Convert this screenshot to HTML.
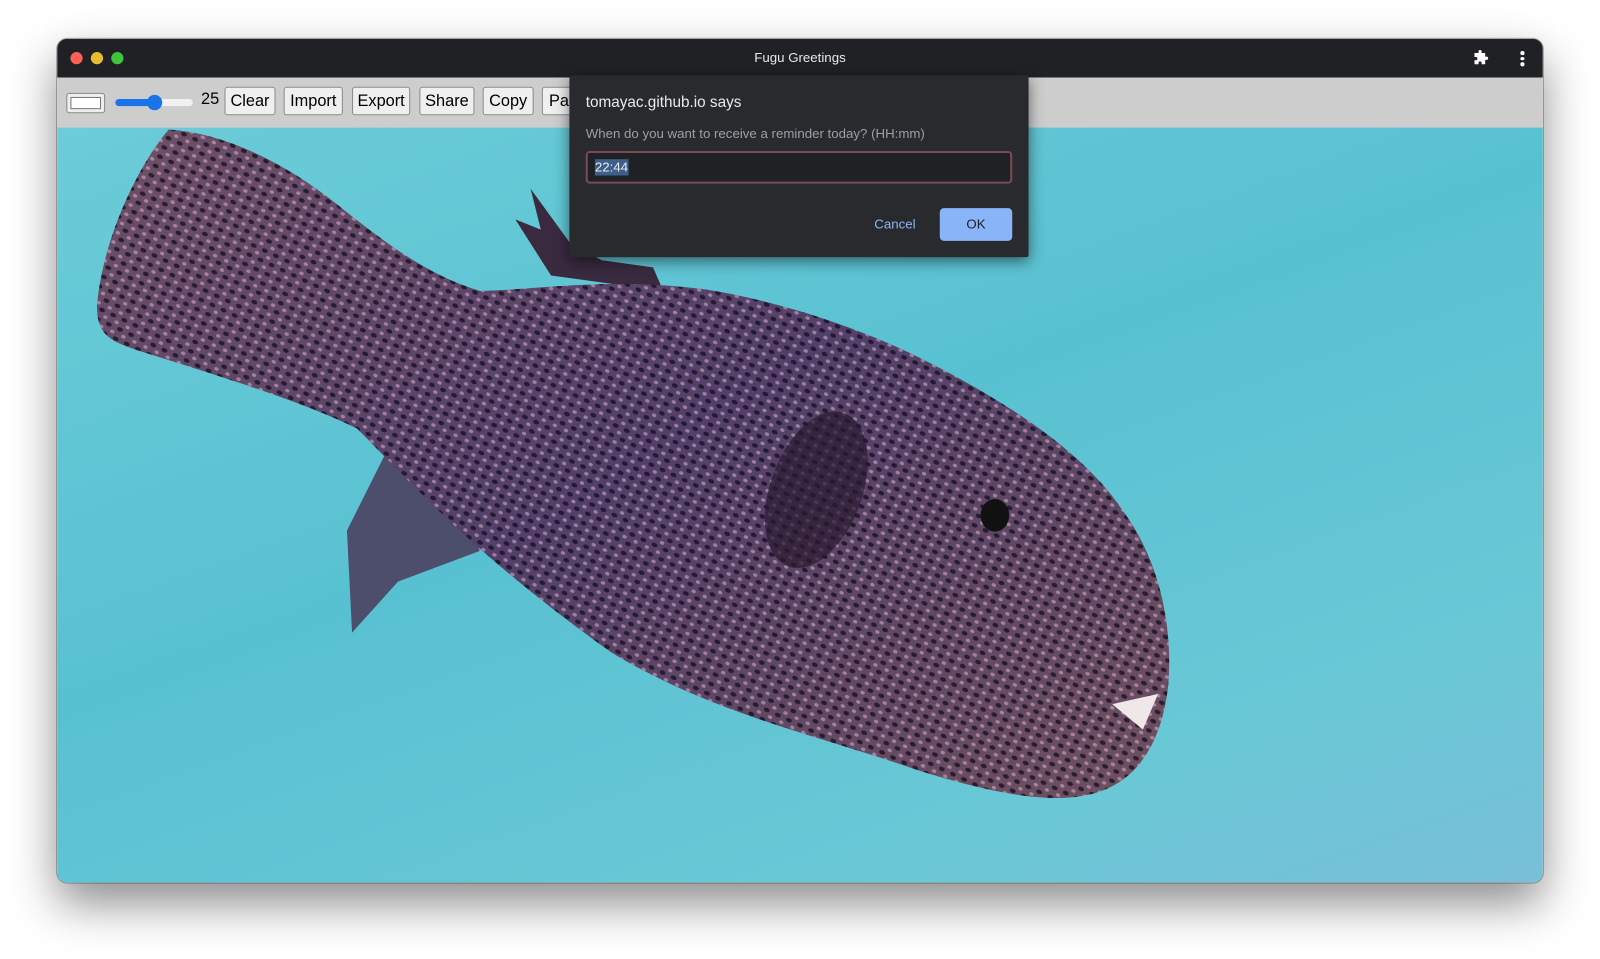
<!DOCTYPE html>
<html><head><meta charset="utf-8"><style>
html,body{margin:0;padding:0;width:1600px;height:959px;overflow:hidden;background:#fff;font-family:"Liberation Sans",Arial,sans-serif}
#w{position:absolute;left:0;top:0;width:1568px;height:940px;transform:scale(1.0204);transform-origin:0 0}
.win{position:absolute;left:56px;top:38px;width:1456px;height:827px;border-radius:10px;overflow:hidden;box-shadow:0 20px 45px rgba(0,0,0,.45),0 0 0 1px rgba(0,0,0,.3)}
.tb{position:absolute;left:0;top:0;width:100%;height:38px;background:#202124}
.dot{position:absolute;top:13px;width:12px;height:12px;border-radius:50%}
.title{position:absolute;left:0;right:0;top:11px;text-align:center;color:#e8e8e8;font-size:13px}
.bar{position:absolute;left:0;top:38px;width:100%;height:49px;background:#cdcdcd}
.btn{position:absolute;top:47px;height:28px;border:1px solid #8a8a8a;border-radius:3px;background:#efefef;font-size:16px;line-height:28px;text-align:center;color:#000;box-sizing:border-box}
.canvas{position:absolute;left:0;top:87px;width:100%;height:740px;background:linear-gradient(160deg,#6cccd8 0%,#58c1d1 45%,#6ac8d6 80%,#78bfd8 100%)}
.dlg{position:absolute;left:558px;top:74px;width:450px;height:178px;background:#292a2d;box-shadow:0 4px 14px rgba(0,0,0,.5);border-radius:2px}
</style></head><body><div id="w">
<div class="win">
<div class="tb">
<div class="dot" style="left:13px;background:#fe5f57"></div>
<div class="dot" style="left:33px;background:#e5bd2e"></div>
<div class="dot" style="left:53px;background:#3fc43a"></div>
<div class="title">Fugu Greetings</div>
<svg style="position:absolute;left:1387px;top:11px" width="16" height="16" viewBox="0 0 16 16"><path fill="#fff" d="M6 1.5a1.5 1.5 0 0 1 3 0V3h3.5v3.5h1.3a1.6 1.6 0 0 1 0 3.2h-1.3V14H9v-1.3a1.5 1.5 0 0 0-3 0V14H2V10h1.3a1.6 1.6 0 0 0 0-3.2H2V3h4z"/></svg>
<div style="position:absolute;left:1434px;top:12px;width:4px">
<div style="width:3.5px;height:3.5px;border-radius:50%;background:#fff;margin-bottom:2px"></div>
<div style="width:3.5px;height:3.5px;border-radius:50%;background:#fff;margin-bottom:2px"></div>
<div style="width:3.5px;height:3.5px;border-radius:50%;background:#fff"></div></div>
</div>
<div class="bar"></div>
<div style="position:absolute;left:9px;top:53px;width:38px;height:20px;border:1px solid #888;border-radius:3px;background:#eee;box-sizing:border-box"><div style="margin:3px;height:12px;border:1px solid #777;background:#fff;box-sizing:border-box"></div></div>
<div style="position:absolute;left:57px;top:59px;width:76px;height:7px;border-radius:4px;background:#f1f1f1"></div>
<div style="position:absolute;left:57px;top:59px;width:38px;height:7px;border-radius:4px;background:#1a73e8"></div>
<div style="position:absolute;left:88px;top:55px;width:15px;height:15px;border-radius:50%;background:#1a73e8"></div>
<div style="position:absolute;left:141px;top:51px;font-size:16px">25</div>
<div class="btn" style="left:164px;width:50px">Clear</div>
<div class="btn" style="left:222px;width:58px">Import</div>
<div class="btn" style="left:289px;width:57px">Export</div>
<div class="btn" style="left:355px;width:54px">Share</div>
<div class="btn" style="left:417px;width:50px">Copy</div>
<div class="btn" style="left:475px;width:60px;text-align:left;padding-left:6px">Paste</div>
<div class="canvas">
<svg width="1456" height="740" viewBox="56 125 1456 740">
<defs>
<pattern id="p" width="12" height="10" patternUnits="userSpaceOnUse" patternTransform="rotate(25)">
<ellipse cx="3" cy="3" rx="3" ry="2" fill="#140c1a" opacity=".75"/>
<ellipse cx="9" cy="8" rx="2.2" ry="1.7" fill="#e0b0c8" opacity=".55"/></pattern>
<linearGradient id="g" x1="0" y1="0" x2="1" y2="1"><stop offset="0" stop-color="#6e5068"/><stop offset=".5" stop-color="#52406a"/><stop offset="1" stop-color="#6e5060"/></linearGradient>
</defs>
<path d="M540 270 L505 215 L530 225 L520 185 L560 240 L590 255 L640 262 L650 285 Z" fill="#3a2a40"/>
<path d="M450 450 L380 440 L340 520 L345 620 L390 570 L470 540 Z" fill="#4a3a5a" opacity=".85"/>
<path d="M165 127 C130 170 100 240 95 300 C95 330 110 335 140 345 C220 370 300 395 350 420 C400 470 460 540 600 640 C700 700 800 720 900 755 C980 780 1040 790 1080 775 C1120 760 1140 720 1145 670 C1150 600 1130 540 1100 500 C1060 440 980 390 900 350 C840 320 760 295 700 285 C600 270 520 285 470 285 C420 270 380 240 330 200 C280 160 220 130 165 127 Z" fill="url(#g)"/>
<path d="M165 127 C130 170 100 240 95 300 C95 330 110 335 140 345 C220 370 300 395 350 420 C400 470 460 540 600 640 C700 700 800 720 900 755 C980 780 1040 790 1080 775 C1120 760 1140 720 1145 670 C1150 600 1130 540 1100 500 C1060 440 980 390 900 350 C840 320 760 295 700 285 C600 270 520 285 470 285 C420 270 380 240 330 200 C280 160 220 130 165 127 Z" fill="url(#p)"/>
<ellipse cx="800" cy="480" rx="45" ry="80" fill="#2a1a30" opacity=".7" transform="rotate(20 800 480)"/>
<ellipse cx="975" cy="505" rx="14" ry="16" fill="#111"/>
<path d="M1090 690 L1135 680 L1120 715 Z" fill="#f0e8e8"/>
</svg>
</div>
</div>
<div class="dlg">
<div style="position:absolute;left:16px;top:18px;color:#e8eaed;font-size:15px">tomayac.github.io says</div>
<div style="position:absolute;left:16px;top:49px;color:#9aa0a6;font-size:13px">When do you want to receive a reminder today? (HH:mm)</div>
<div style="position:absolute;left:16px;top:74px;width:418px;height:32px;border:2px solid #7c4a55;border-radius:4px;background:#202124;box-sizing:border-box"><span style="position:absolute;left:7px;top:6px;background:#3e5f8a;color:#e8eaed;font-size:13px;line-height:16px">22:44</span></div>
<div style="position:absolute;left:284px;top:130px;width:70px;height:32px;line-height:32px;text-align:center;color:#8ab4f8;font-size:13px">Cancel</div>
<div style="position:absolute;left:363px;top:130px;width:71px;height:32px;line-height:32px;text-align:center;background:#8ab4f8;color:#202124;font-size:13px;border-radius:4px">OK</div>
</div>
</div></body></html>
